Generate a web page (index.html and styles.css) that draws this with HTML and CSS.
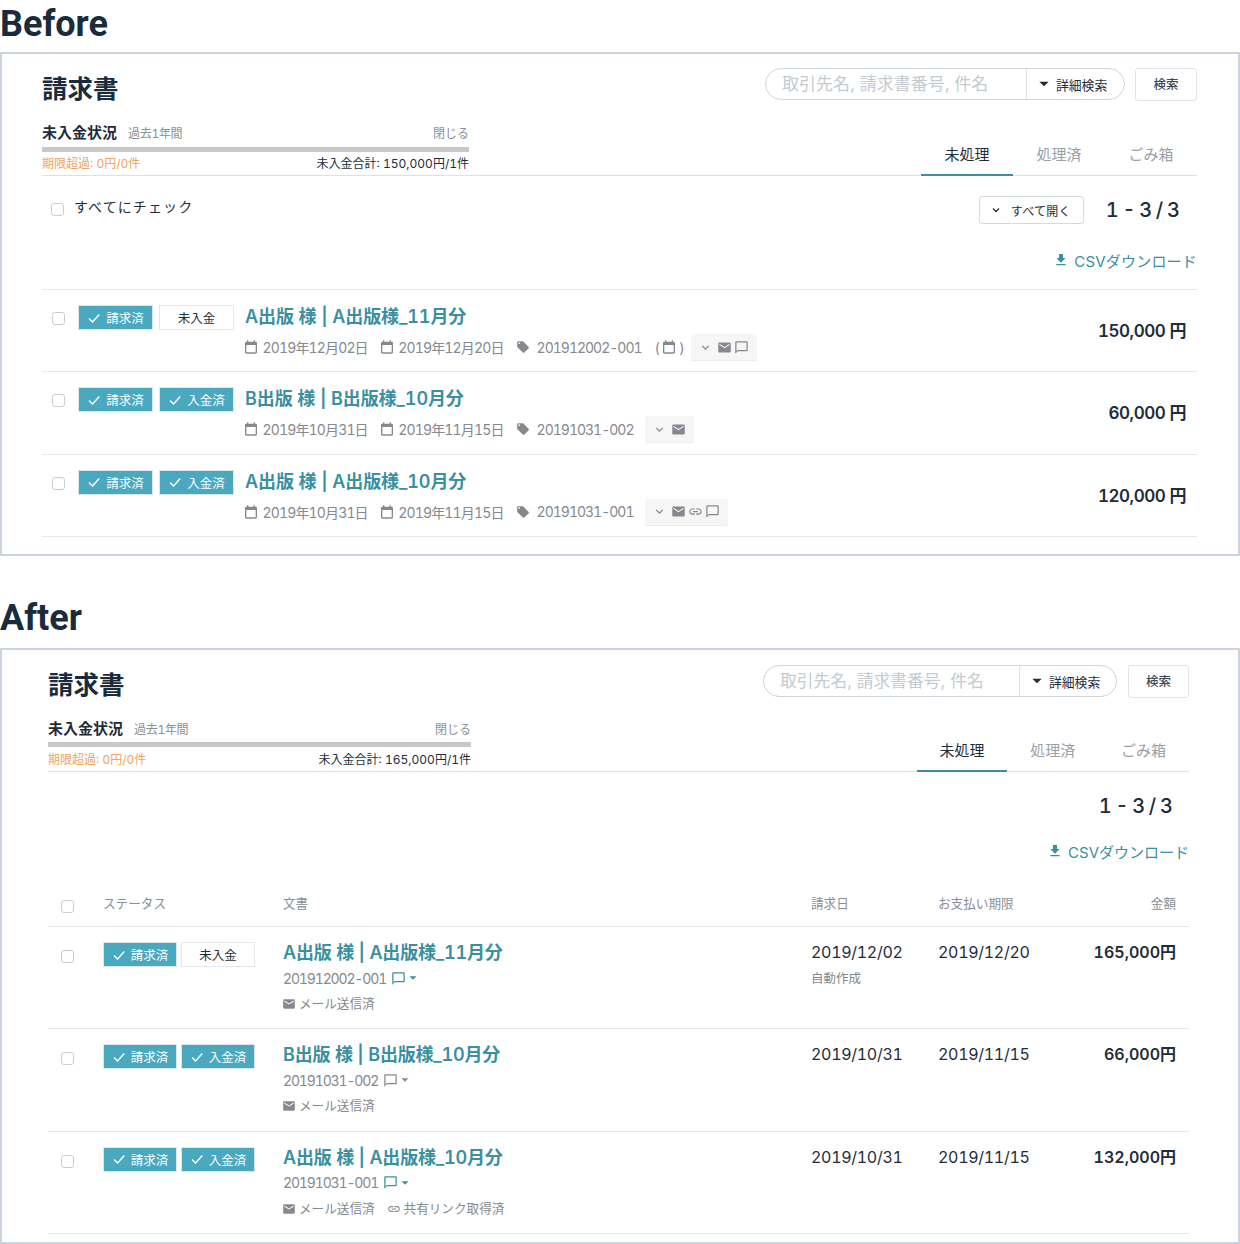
FILE: index.html
```html
<!DOCTYPE html>
<html>
    <head>
        <title>Before / After</title>
        <link rel="stylesheet" href="styles.css">
    </head>
    <body>
        <svg class="sprite" xmlns="http://www.w3.org/2000/svg">
            <symbol id="i-calendar" viewBox="0 0 24 24"><path d="M19 4h-1V2h-2v2H8V2H6v2H5c-1.1 0-2 .9-2 2v14c0 1.1.9 2 2 2h14c1.1 0 2-.9 2-2V6c0-1.1-.9-2-2-2zm0 16H5V9h14v11z"/></symbol>
            <symbol id="i-tag" viewBox="0 0 24 24"><path d="M21.41 11.58l-9-9C12.05 2.22 11.55 2 11 2H4c-1.1 0-2 .9-2 2v7c0 .55.22 1.05.59 1.42l9 9c.36.36.86.58 1.41.58.55 0 1.05-.22 1.41-.59l7-7c.37-.36.59-.86.59-1.41 0-.55-.23-1.06-.59-1.42zM5.5 7C4.67 7 4 6.33 4 5.5S4.67 4 5.5 4 7 4.67 7 5.5 6.33 7 5.5 7z"/></symbol>
            <symbol id="i-mail" viewBox="0 0 24 24"><path d="M20 4H4c-1.1 0-2 .9-2 2v12c0 1.1.9 2 2 2h16c1.1 0 2-.9 2-2V6c0-1.1-.9-2-2-2zm0 4l-8 5-8-5V6l8 5 8-5v2z"/></symbol>
            <symbol id="i-comment" viewBox="0 0 24 24"><path d="M20 2H4c-1.1 0-2 .9-2 2v18l4-4h14c1.1 0 2-.9 2-2V4c0-1.1-.9-2-2-2zm0 14H6l-2 2V4h16v12z"/></symbol>
            <symbol id="i-link" viewBox="0 0 24 24"><path d="M3.9 12c0-1.71 1.39-3.1 3.1-3.1h4V7H7c-2.76 0-5 2.24-5 5s2.24 5 5 5h4v-1.9H7c-1.71 0-3.1-1.39-3.1-3.1zM8 13h8v-2H8v2zm9-6h-4v1.9h4c1.71 0 3.1 1.39 3.1 3.1s-1.39 3.1-3.1 3.1h-4V17h4c2.76 0 5-2.24 5-5s-2.24-5-5-5z"/></symbol>
            <symbol id="i-download" viewBox="0 0 24 24"><path d="M19 9h-4V3H9v6H5l7 7 7-7zM5 18v2h14v-2H5z"/></symbol>
            <symbol id="i-caret" viewBox="0 0 24 24"><path d="M5 8.5l7 7 7-7z"/></symbol>
            <symbol id="i-chevron" viewBox="0 0 24 24"><path d="M6 9l6 6 6-6" fill="none" stroke="currentColor" stroke-width="2.6"/></symbol>
            <symbol id="i-check" viewBox="0 0 24 24"><path d="M3.5 13l6 6L21 6" fill="none" stroke="currentColor" stroke-width="2.4"/></symbol>
        </svg>

        <h1 class="section-title">Before</h1>
        <div class="panel panel-before">
            <div class="header">
                <h2 class="page-title">請求書</h2>
                <div class="search">
                    <div class="search-box">
                        <input class="search-input" type="text" placeholder="取引先名, 請求書番号, 件名">
                        <div class="search-detail"><svg class="icon-caret"><use href="#i-caret"/></svg>詳細検索</div>
                    </div>
                    <div class="search-button">検索</div>
                </div>
            </div>
            <div class="overview">
                <div class="status">
                    <div class="status-top">
                        <span class="status-title">未入金状況</span>
                        <span class="status-range">過去1年間</span>
                        <span class="status-close">閉じる</span>
                    </div>
                    <div class="status-bar"></div>
                    <div class="status-foot">
                        <span class="status-overdue">期限超過: 0円/0件</span>
                        <span>未入金合計: 150,000円/1件</span>
                    </div>
                </div>
                <ul class="tabs">
                    <li class="tab tab-active">未処理</li>
                    <li class="tab">処理済</li>
                    <li class="tab">ごみ箱</li>
                </ul>
            </div>
            <div class="tools">
                <label class="check-all"><input class="check" type="checkbox">すべてにチェック</label>
                <div class="open-all"><svg class="icon-chevron"><use href="#i-chevron"/></svg>すべて開く</div>
                <div class="pager">1 - 3 / 3</div>
            </div>
            <div class="csv"><svg class="icon-download"><use href="#i-download"/></svg>CSVダウンロード</div>

            <div class="row">
                <input class="check" type="checkbox">
                <div class="tags">
                    <span class="tag tag-on"><svg class="icon-check"><use href="#i-check"/></svg>請求済</span>
                    <span class="tag">未入金</span>
                </div>
                <div class="row-body">
                    <a class="doc-title">A出版 様 | A出版様_11月分</a>
                    <div class="meta">
                        <svg class="icon-meta"><use href="#i-calendar"/></svg><span class="meta-date">2019年12月02日</span>
                        <svg class="icon-meta"><use href="#i-calendar"/></svg><span class="meta-date">2019年12月20日</span>
                        <svg class="icon-tag"><use href="#i-tag"/></svg><span class="meta-number">201912002-001</span>
                        <span class="meta-auto">(<svg class="icon-meta"><use href="#i-calendar"/></svg>)</span>
                        <div class="chip">
                            <svg class="icon-chip-chevron"><use href="#i-chevron"/></svg>
                            <svg class="icon-chip"><use href="#i-mail"/></svg>
                            <svg class="icon-chip"><use href="#i-comment"/></svg>
                        </div>
                    </div>
                </div>
                <div class="amount">150,000 円</div>
            </div>
            <div class="row">
                <input class="check" type="checkbox">
                <div class="tags">
                    <span class="tag tag-on"><svg class="icon-check"><use href="#i-check"/></svg>請求済</span>
                    <span class="tag tag-on"><svg class="icon-check"><use href="#i-check"/></svg>入金済</span>
                </div>
                <div class="row-body">
                    <a class="doc-title">B出版 様 | B出版様_10月分</a>
                    <div class="meta">
                        <svg class="icon-meta"><use href="#i-calendar"/></svg><span class="meta-date">2019年10月31日</span>
                        <svg class="icon-meta"><use href="#i-calendar"/></svg><span class="meta-date">2019年11月15日</span>
                        <svg class="icon-tag"><use href="#i-tag"/></svg><span class="meta-number">20191031-002</span>
                        <div class="chip">
                            <svg class="icon-chip-chevron"><use href="#i-chevron"/></svg>
                            <svg class="icon-chip"><use href="#i-mail"/></svg>
                        </div>
                    </div>
                </div>
                <div class="amount">60,000 円</div>
            </div>
            <div class="row row-last">
                <input class="check" type="checkbox">
                <div class="tags">
                    <span class="tag tag-on"><svg class="icon-check"><use href="#i-check"/></svg>請求済</span>
                    <span class="tag tag-on"><svg class="icon-check"><use href="#i-check"/></svg>入金済</span>
                </div>
                <div class="row-body">
                    <a class="doc-title">A出版 様 | A出版様_10月分</a>
                    <div class="meta">
                        <svg class="icon-meta"><use href="#i-calendar"/></svg><span class="meta-date">2019年10月31日</span>
                        <svg class="icon-meta"><use href="#i-calendar"/></svg><span class="meta-date">2019年11月15日</span>
                        <svg class="icon-tag"><use href="#i-tag"/></svg><span class="meta-number">20191031-001</span>
                        <div class="chip">
                            <svg class="icon-chip-chevron"><use href="#i-chevron"/></svg>
                            <svg class="icon-chip"><use href="#i-mail"/></svg>
                            <svg class="icon-chip"><use href="#i-link"/></svg>
                            <svg class="icon-chip"><use href="#i-comment"/></svg>
                        </div>
                    </div>
                </div>
                <div class="amount">120,000 円</div>
            </div>
        </div>

        <h1 class="section-title section-title-after">After</h1>
        <div class="panel panel-after">
            <div class="header">
                <h2 class="page-title">請求書</h2>
                <div class="search">
                    <div class="search-box">
                        <input class="search-input" type="text" placeholder="取引先名, 請求書番号, 件名">
                        <div class="search-detail"><svg class="icon-caret"><use href="#i-caret"/></svg>詳細検索</div>
                    </div>
                    <div class="search-button">検索</div>
                </div>
            </div>
            <div class="overview">
                <div class="status">
                    <div class="status-top">
                        <span class="status-title">未入金状況</span>
                        <span class="status-range">過去1年間</span>
                        <span class="status-close">閉じる</span>
                    </div>
                    <div class="status-bar"></div>
                    <div class="status-foot">
                        <span class="status-overdue">期限超過: 0円/0件</span>
                        <span>未入金合計: 165,000円/1件</span>
                    </div>
                </div>
                <ul class="tabs">
                    <li class="tab tab-active">未処理</li>
                    <li class="tab">処理済</li>
                    <li class="tab">ごみ箱</li>
                </ul>
            </div>
            <div class="tools">
                <div class="pager">1 - 3 / 3</div>
            </div>
            <div class="csv"><svg class="icon-download"><use href="#i-download"/></svg>CSVダウンロード</div>

            <div class="grid-row grid-head">
                <input class="check" type="checkbox">
                <div>ステータス</div>
                <div>文書</div>
                <div>請求日</div>
                <div>お支払い期限</div>
                <div class="grid-amount-head">金額</div>
            </div>
            <div class="grid-row">
                <input class="check" type="checkbox">
                <div class="tags">
                    <span class="tag tag-on"><svg class="icon-check"><use href="#i-check"/></svg>請求済</span>
                    <span class="tag">未入金</span>
                </div>
                <div>
                    <a class="doc-title">A出版 様 | A出版様_11月分</a>
                    <div class="doc-number">201912002-001<span class="doc-note doc-note-on"><svg class="icon-note"><use href="#i-comment"/></svg><svg class="icon-note-caret"><use href="#i-caret"/></svg></span></div>
                    <div class="doc-flags">
                        <span class="flag"><svg class="icon-flag"><use href="#i-mail"/></svg>メール送信済</span>
                    </div>
                </div>
                <div>
                    <div class="grid-date">2019/12/02</div>
                    <div class="grid-note">自動作成</div>
                </div>
                <div class="grid-date">2019/12/20</div>
                <div class="grid-amount">165,000円</div>
            </div>
            <div class="grid-row">
                <input class="check" type="checkbox">
                <div class="tags">
                    <span class="tag tag-on"><svg class="icon-check"><use href="#i-check"/></svg>請求済</span>
                    <span class="tag tag-on"><svg class="icon-check"><use href="#i-check"/></svg>入金済</span>
                </div>
                <div>
                    <a class="doc-title">B出版 様 | B出版様_10月分</a>
                    <div class="doc-number">20191031-002<span class="doc-note"><svg class="icon-note"><use href="#i-comment"/></svg><svg class="icon-note-caret"><use href="#i-caret"/></svg></span></div>
                    <div class="doc-flags">
                        <span class="flag"><svg class="icon-flag"><use href="#i-mail"/></svg>メール送信済</span>
                    </div>
                </div>
                <div class="grid-date">2019/10/31</div>
                <div class="grid-date">2019/11/15</div>
                <div class="grid-amount">66,000円</div>
            </div>
            <div class="grid-row">
                <input class="check" type="checkbox">
                <div class="tags">
                    <span class="tag tag-on"><svg class="icon-check"><use href="#i-check"/></svg>請求済</span>
                    <span class="tag tag-on"><svg class="icon-check"><use href="#i-check"/></svg>入金済</span>
                </div>
                <div>
                    <a class="doc-title">A出版 様 | A出版様_10月分</a>
                    <div class="doc-number">20191031-001<span class="doc-note doc-note-on"><svg class="icon-note"><use href="#i-comment"/></svg><svg class="icon-note-caret"><use href="#i-caret"/></svg></span></div>
                    <div class="doc-flags">
                        <span class="flag"><svg class="icon-flag"><use href="#i-mail"/></svg>メール送信済</span>
                        <span class="flag"><svg class="icon-flag"><use href="#i-link"/></svg>共有リンク取得済</span>
                    </div>
                </div>
                <div class="grid-date">2019/10/31</div>
                <div class="grid-date">2019/11/15</div>
                <div class="grid-amount">132,000円</div>
            </div>
        </div>
    </body>
</html>
```

FILE: styles.css
```css
* {
    box-sizing: border-box;
}
body {
    margin: 0;
    font-family: Inter, "Noto Sans CJK JP", sans-serif;
    font-variant-numeric: tabular-nums;
    color: #1f2d3a;
    background: #fff;
}
.sprite {
    display: none;
}
svg {
    fill: currentColor;
    flex: none;
}

.section-title {
    margin: 0 0 4px;
    font-family: Roboto, sans-serif;
    font-size: 36px;
    line-height: 48px;
    font-weight: 700;
    color: #1a2b3c;
}
.section-title-after {
    margin: 38px 0 6px;
}
.panel {
    border: 2px solid #cbd5e0;
}
.panel-before {
    height: 504px;
    padding: 14px 41px 0 40px;
}
.panel-after {
    height: 596px;
    padding: 15px 49px 0 46px;
}

.header {
    display: flex;
    justify-content: space-between;
    height: 33px;
}
.page-title {
    margin: 6px 0 0;
    font-size: 25.5px;
    line-height: 28px;
    font-weight: 700;
    color: #1a2b3c;
}
.panel-before .page-title {
    margin-top: 7px;
}
.search {
    display: flex;
}
.search-box {
    display: flex;
    width: 360px;
    height: 32px;
    border: 1px solid #cfd6dc;
    border-radius: 16px;
}
.panel-after .search-box {
    width: 354px;
}
.search-input {
    flex: 1;
    min-width: 0;
    border: 0;
    padding: 0 0 0 16px;
    background: none;
    font-family: inherit;
    font-size: 17px;
    outline: none;
}
.panel-after .search-input {
    font-size: 16.8px;
}
.search-input::placeholder {
    color: #c3cad1;
    opacity: 1;
}
.search-detail {
    display: flex;
    align-items: center;
    width: 98px;
    padding-left: 9px;
    border-left: 1px solid #dfe3e7;
    font-size: 12.8px;
}
.panel-after .search-detail {
    width: 97px;
}
.icon-caret {
    width: 16px;
    height: 16px;
    margin-right: 4px;
}
.search-button {
    width: 62px;
    height: 33px;
    margin-left: 10px;
    border: 1px solid #e0e5ea;
    border-radius: 3px;
    font-size: 12.5px;
    font-weight: 500;
    line-height: 31px;
    text-align: center;
    color: #3d4a56;
}
.panel-after .search-button {
    width: 61px;
    margin-left: 11px;
}

.overview {
    display: flex;
    justify-content: space-between;
    align-items: flex-end;
    height: 75px;
    border-bottom: 1px solid #dde1e6;
}
.panel-after .overview {
    height: 74px;
}
.status {
    width: 427px;
    padding-bottom: 2px;
}
.panel-after .status {
    width: 423px;
}
.status-top {
    display: flex;
    align-items: baseline;
    height: 20px;
    margin-bottom: 4px;
    line-height: 20px;
}
.panel-after .status-top {
    margin-bottom: 3px;
}
.status-title {
    font-size: 15px;
    font-weight: 700;
}
.status-range {
    margin-left: 11px;
    font-size: 12px;
    letter-spacing: -0.3px;
    color: #8a9097;
}
.status-close {
    margin-left: auto;
    font-size: 12px;
    color: #8a9097;
}
.status-bar {
    height: 5px;
    margin-bottom: 3px;
    background: #c8c8c8;
}
.panel-after .status-bar {
    margin-bottom: 4px;
}
.status-foot {
    display: flex;
    justify-content: space-between;
    font-size: 12px;
    line-height: 18px;
}
.status-overdue {
    color: #f0a461;
}
.tabs {
    display: flex;
    margin: 0 0 -1px;
    padding: 0;
    list-style: none;
}
.tab {
    width: 92px;
    height: 43px;
    border-bottom: 2px solid transparent;
    font-size: 15px;
    line-height: 43px;
    text-align: center;
    color: #9aa0a6;
}
.panel-after .tab {
    width: 90.8px;
}
.tab-active {
    border-bottom-color: #3a8fa0;
    color: #1f2d3a;
}

.tools {
    display: flex;
    align-items: center;
    justify-content: flex-end;
    height: 28px;
    margin-top: 20px;
}
.panel-after .tools {
    height: 30px;
    margin-top: 19px;
}
.check-all {
    display: flex;
    align-items: flex-start;
    align-self: flex-start;
    margin: 1px auto 0 0;
    padding-left: 9px;
    font-size: 14px;
    line-height: 20px;
    letter-spacing: 1.1px;
}
.check-all .check {
    margin: 6px 10px 0 0;
}
.check {
    appearance: none;
    flex: none;
    width: 13px;
    height: 13px;
    margin: 0;
    border: 1px solid #c9ced3;
    border-radius: 3px;
    background: #fff;
}
.open-all {
    display: flex;
    align-items: center;
    width: 105px;
    height: 28px;
    padding-left: 10px;
    border: 1px solid #d5dae0;
    border-radius: 3px;
    font-size: 12px;
    letter-spacing: 0.3px;
}
.icon-chevron {
    width: 12px;
    height: 12px;
    margin-right: 9px;
}
.pager {
    margin: 0 17px 0 22px;
    font-size: 20px;
    font-weight: 500;
    word-spacing: -1.6px;
}
.panel-after .pager {
    margin-right: 16px;
}
.csv {
    display: flex;
    justify-content: flex-end;
    align-items: center;
    height: 20px;
    margin: 26px 0 19px;
    font-size: 15px;
    letter-spacing: 0.2px;
    color: #3a8fa0;
}
.panel-after .csv {
    margin: 20px 0 0;
    letter-spacing: 0;
}
.icon-download {
    width: 16px;
    height: 16px;
    margin-right: 5px;
}

.row {
    display: flex;
    align-items: flex-start;
    height: 82.4px;
    padding: 14px 11px 0 10px;
    border-top: 1px solid #e3e6ea;
}
.row-last {
    height: 83px;
    border-bottom: 1px solid #e3e6ea;
}
.row .check {
    margin: 8px 13px 0 0;
}
.tags {
    display: flex;
    gap: 6px;
}
.row .tags {
    margin-top: 1px;
}
.tag {
    display: flex;
    align-items: center;
    justify-content: center;
    width: 75px;
    height: 25px;
    border: 1px solid #e3e7ec;
    font-size: 12.5px;
}
.tag-on {
    border-color: #dbe7ec;
    background: #4aa8bf;
    color: #fff;
}
.icon-check {
    width: 14px;
    height: 14px;
    margin-right: 5px;
}
.row-body {
    margin-left: 11px;
}
.doc-title {
    display: block;
    font-size: 18px;
    line-height: 24px;
    font-weight: 600;
    letter-spacing: -0.1px;
    color: #3a8fa0;
}
.row .doc-title {
    margin-top: 1px;
}
.meta {
    display: flex;
    align-items: center;
    height: 26px;
    margin-top: 5px;
    font-size: 14px;
    letter-spacing: -0.85px;
    color: #85898e;
}
.icon-meta {
    width: 16px;
    height: 16px;
}
.icon-tag {
    width: 14px;
    height: 14px;
    margin-left: 1px;
}
.meta > .icon-meta:first-child {
    margin-left: -2px;
}
.meta-date {
    margin: 0 11px 0 3.5px;
}
.meta-number {
    margin: 0 11px 0 7px;
    letter-spacing: -1px;
}
.meta-auto {
    display: flex;
    align-items: center;
    gap: 2px;
    margin: 0 7px 0 2px;
}
.chip {
    display: flex;
    align-items: center;
    height: 26px;
    padding: 0 8px;
    border-radius: 2px;
    background: #f6f6f7;
    box-shadow: 0 1px 0 #ebecee;
}
.icon-chip-chevron {
    width: 13px;
    height: 13px;
    margin-right: 5px;
}
.icon-chip {
    width: 15px;
    height: 15px;
}
.icon-chip + .icon-chip {
    margin-left: 2px;
}
.amount {
    margin: 17px 0 0 auto;
    font-size: 17px;
    line-height: 20px;
    font-weight: 600;
    letter-spacing: -0.45px;
}

.grid-row {
    display: grid;
    grid-template-columns: 55px 180px 528px 127px 1fr 100px;
    height: 102.4px;
    padding-top: 15px;
    border-bottom: 1px solid #e3e6ea;
}
.grid-row .check {
    margin: 8px 0 0 13px;
}
.grid-head {
    height: 66px;
    padding-top: 33px;
    font-size: 12.6px;
    line-height: 20px;
    color: #8a9097;
}
.grid-head .check {
    margin: 6px 0 0 13px;
}
.grid-amount-head {
    padding-right: 13px;
    text-align: right;
}
.grid-row .tags {
    align-items: flex-start;
    gap: 4px;
}
.grid-row .tag {
    width: 74px;
}
.grid-row .doc-title {
    margin-top: -1px;
    letter-spacing: -0.2px;
}
.doc-number {
    display: flex;
    align-items: center;
    height: 20px;
    margin-top: 3px;
    font-size: 14px;
    letter-spacing: -1.15px;
    color: #85898e;
}
.doc-note {
    display: flex;
    align-items: center;
    margin-left: 5px;
}
.doc-note-on {
    color: #3a8fa0;
}
.icon-note {
    width: 15px;
    height: 15px;
    margin-right: 1px;
}
.icon-note-caret {
    width: 12px;
    height: 12px;
}
.doc-flags {
    display: flex;
    gap: 13px;
    margin-top: 7px;
    font-size: 12.6px;
    line-height: 18px;
    color: #85898e;
}
.flag {
    display: flex;
    align-items: center;
}
.icon-flag {
    width: 14px;
    height: 14px;
    margin: 0 3px 0 -1px;
}
.grid-date {
    font-size: 16px;
    line-height: 20px;
    letter-spacing: -0.3px;
}
.grid-note {
    margin-top: 8px;
    font-size: 12.5px;
    line-height: 18px;
    color: #85898e;
}
.grid-amount {
    padding-right: 13px;
    font-size: 16px;
    line-height: 20px;
    font-weight: 600;
    text-align: right;
}
```
